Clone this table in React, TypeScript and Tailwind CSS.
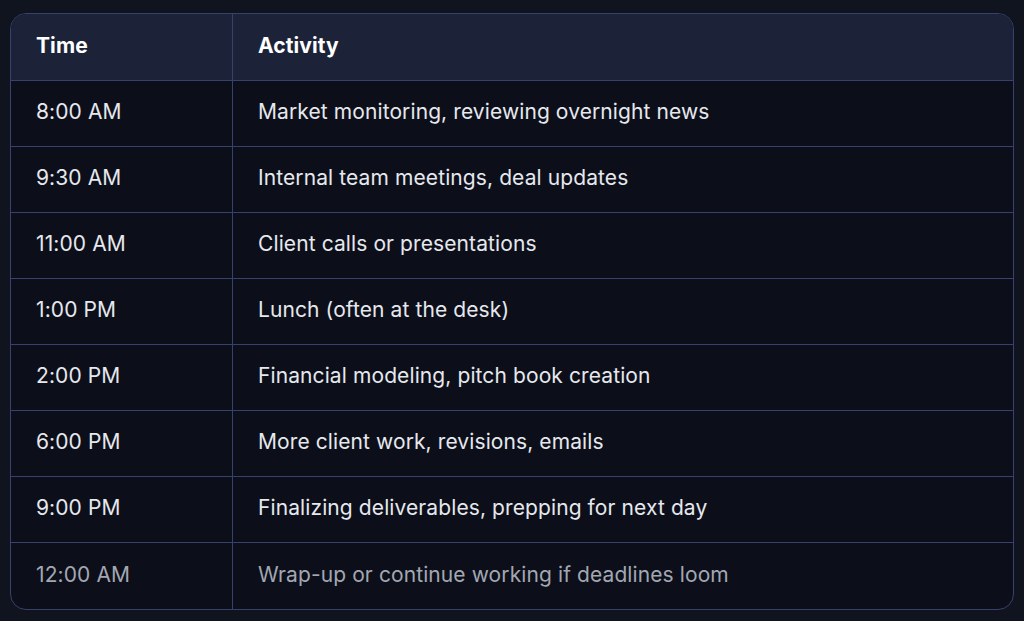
const rows = [
  ["8:00 AM", "Market monitoring, reviewing overnight news"],
  ["9:30 AM", "Internal team meetings, deal updates"],
  ["11:00 AM", "Client calls or presentations"],
  ["1:00 PM", "Lunch (often at the desk)"],
  ["2:00 PM", "Financial modeling, pitch book creation"],
  ["6:00 PM", "More client work, revisions, emails"],
  ["9:00 PM", "Finalizing deliverables, prepping for next day"],
  ["12:00 AM", "Wrap-up or continue working if deadlines loom"],
];

export default function App() {
  return (
    <div
      className="min-h-[621px] w-full bg-[#10141f] pt-[13px] pl-[10px]"
      style={{ fontFamily: "Inter, 'Noto Sans', sans-serif" }}
    >
      <div className="w-[1004px] overflow-hidden rounded-[16px] border border-[#36416e] bg-[#0c0f19] tracking-[0.1px]">
        <div className="flex h-[67px] items-center border-b border-[#36416e] bg-[#1c2339] text-[21px] font-bold text-white">
          <div className="flex h-full w-[222px] items-center border-r border-[#36416e] pb-[3px] pl-[25px]">
            Time
          </div>
          <div className="pb-[3px] pl-[25px]">Activity</div>
        </div>
        {rows.map(([time, activity], i) => {
          const last = i === rows.length - 1;
          return (
            <div
              key={time}
              className={`flex h-[66px] items-center text-[21px] ${
                last ? "text-[#a3a7b3]" : "border-b border-[#36416e] text-[#e6e8ee]"
              }`}
            >
              <div className="flex h-full w-[222px] items-center border-r border-[#36416e] pb-[3px] pl-[25px]">
                {time}
              </div>
              <div className="pb-[3px] pl-[25px]">{activity}</div>
            </div>
          );
        })}
      </div>
    </div>
  );
}
